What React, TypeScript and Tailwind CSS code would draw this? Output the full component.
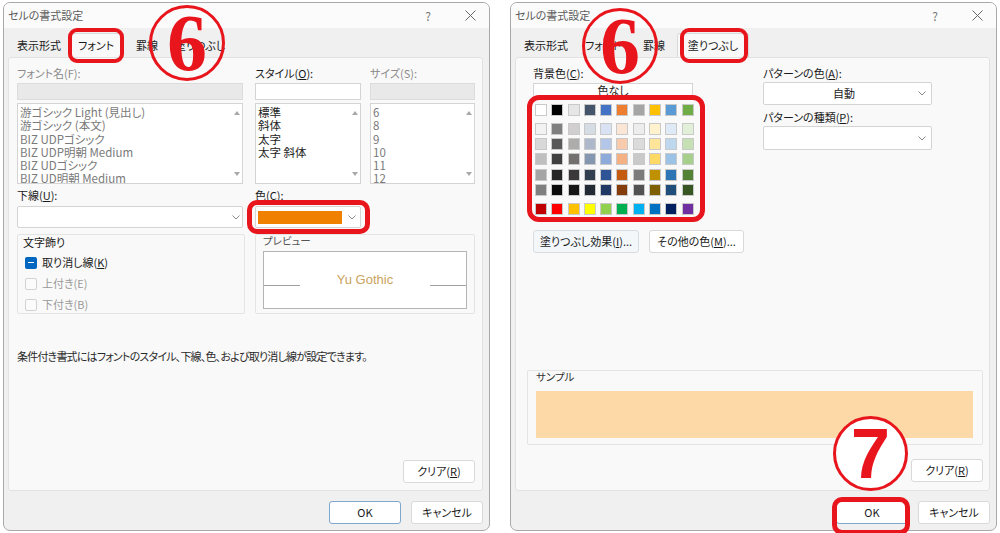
import React from 'react';

const swatchTop: string[] = [
  'bg-[#ffffff]', 'bg-[#000000]', 'bg-[#e7e6e6]', 'bg-[#44546a]', 'bg-[#4472c4]',
  'bg-[#ed7d31]', 'bg-[#a5a5a5]', 'bg-[#ffc000]', 'bg-[#5b9bd5]', 'bg-[#70ad47]',
];

const swatchShades: string[][] = [
  ['bg-[#f2f2f2]', 'bg-[#7f7f7f]', 'bg-[#d0cece]', 'bg-[#d6dce4]', 'bg-[#d9e2f3]', 'bg-[#fbe5d5]', 'bg-[#ededed]', 'bg-[#fff2cc]', 'bg-[#deebf6]', 'bg-[#e2efd9]'],
  ['bg-[#d8d8d8]', 'bg-[#595959]', 'bg-[#aeabab]', 'bg-[#adb9ca]', 'bg-[#b4c6e7]', 'bg-[#f7cbac]', 'bg-[#dbdbdb]', 'bg-[#fee599]', 'bg-[#bdd7ee]', 'bg-[#c5e0b3]'],
  ['bg-[#bfbfbf]', 'bg-[#3f3f3f]', 'bg-[#757070]', 'bg-[#8496b0]', 'bg-[#8eaadb]', 'bg-[#f4b183]', 'bg-[#c9c9c9]', 'bg-[#ffd965]', 'bg-[#9cc3e5]', 'bg-[#a8d08d]'],
  ['bg-[#a5a5a5]', 'bg-[#262626]', 'bg-[#3a3838]', 'bg-[#323f4f]', 'bg-[#2f5496]', 'bg-[#c55a11]', 'bg-[#7b7b7b]', 'bg-[#bf9000]', 'bg-[#2e75b5]', 'bg-[#538135]'],
  ['bg-[#7f7f7f]', 'bg-[#0c0c0c]', 'bg-[#171616]', 'bg-[#222a35]', 'bg-[#1f3864]', 'bg-[#843c0b]', 'bg-[#525252]', 'bg-[#7f6000]', 'bg-[#1e4e79]', 'bg-[#375623]'],
];

const swatchStandard: string[] = [
  'bg-[#c00000]', 'bg-[#ff0000]', 'bg-[#ffc000]', 'bg-[#ffff00]', 'bg-[#92d050]',
  'bg-[#00b050]', 'bg-[#00b0f0]', 'bg-[#0070c0]', 'bg-[#002060]', 'bg-[#7030a0]',
];

const tabLabels = ['表示形式', 'フォント', '罫線', '塗りつぶし'];

const Chevron: React.FC = () => (
  <svg width="8" height="5" viewBox="0 0 8 5" fill="none" stroke="#8a8a8a" strokeWidth="1">
    <polyline points="0.5,0.5 4,4 7.5,0.5" />
  </svg>
);

const ScrollArrows: React.FC = () => (
  <div className="w-[11px] flex flex-col justify-between items-center py-[7px]">
    <svg width="6" height="4" viewBox="0 0 6 4"><polygon points="3,0 6,4 0,4" fill="#a8a8a8" /></svg>
    <svg width="6" height="4" viewBox="0 0 6 4"><polygon points="0,0 6,0 3,4" fill="#a8a8a8" /></svg>
  </div>
);

const ListBox: React.FC<{ items: string[]; disabled?: boolean }> = ({ items, disabled }) => (
  <div className="mt-[3px] h-[81px] bg-white border border-[#d4d4d4] flex overflow-hidden">
    <div className={`flex-1 pl-[2px] pt-[2px] text-[11.5px] leading-[13.3px] ${disabled ? 'text-[#7a7a7a]' : 'text-[#222]'}`}>
      {items.map((it) => (
        <div key={it} className="whitespace-nowrap">{it}</div>
      ))}
    </div>
    <ScrollArrows />
  </div>
);

const Btn: React.FC<{ children: React.ReactNode; w: string; tint?: boolean; primary?: boolean }> = ({ children, w, tint, primary }) => (
  <div
    className={`${w} h-[23px] flex items-center justify-center text-[11px] text-[#1a1a1a] rounded-[3px] border ${
      primary ? 'border-[#7fa6cc] bg-white' : tint ? 'border-[#d8dde2] bg-[#f3f7fa]' : 'border-[#d9d9d9] bg-white'
    }`}
  >
    {children}
  </div>
);

const Dialog: React.FC<{ tabWidths: string[]; selected: number; children: React.ReactNode }> = ({ tabWidths, selected, children }) => (
  <div className="w-[487px] h-[529px] flex flex-col border border-[#a9a9a9] rounded-[7px] overflow-hidden bg-[#f0f0f0]">
    <div className="h-[25px] shrink-0 bg-[#fbfbfb] flex items-center pl-[4px] pr-[12px]">
      <span className="text-[11px] text-[#5c5c5c]">セルの書式設定</span>
      <span className="ml-auto w-[10px] text-center text-[12px] text-[#777]">?</span>
      <span className="ml-[30px] w-[14px] flex justify-center">
        <svg width="11" height="11" viewBox="0 0 11 11" stroke="#666" strokeWidth="1">
          <line x1="0.5" y1="0.5" x2="10.5" y2="10.5" />
          <line x1="10.5" y1="0.5" x2="0.5" y2="10.5" />
        </svg>
      </span>
    </div>
    <div className="h-[29px] shrink-0 flex items-end pl-[6px]">
      {tabLabels.map((t, i) => (
        <div
          key={t}
          className={`${tabWidths[i]} h-[24px] flex items-center justify-center text-[11px] text-[#1a1a1a] ${
            i === selected ? 'bg-[#f9f9f9] border border-b-0 border-[#dadada] rounded-t-[3px]' : ''
          }`}
        >
          {t}
        </div>
      ))}
    </div>
    <div className="h-[434px] shrink-0 ml-[4px] mr-[6px] bg-[#f9f9f9] border border-[#e2e2e2] rounded-[3px] flex flex-col">
      {children}
    </div>
    <div className="flex-1 flex justify-end gap-[10px] pr-[6px] pt-[10px]">
      <Btn w="w-[72px]" primary>OK</Btn>
      <Btn w="w-[72px]">キャンセル</Btn>
    </div>
  </div>
);

const FontPanel: React.FC = () => (
  <div className="flex-1 flex flex-col pl-[8px] pr-[7px] pt-[8px] pb-[7px]">
    <div className="flex">
      <div className="w-[226px]">
        <div className="h-[14px] leading-[14px] text-[11px] text-[#8a8a8a]">フォント名(F):</div>
        <div className="mt-[3px] h-[17px] bg-[#e9e9e9] border border-[#dcdcdc]" />
        <ListBox
          disabled
          items={['游ゴシック Light (見出し)', '游ゴシック (本文)', 'BIZ UDPゴシック', 'BIZ UDP明朝 Medium', 'BIZ UDゴシック', 'BIZ UD明朝 Medium']}
        />
      </div>
      <div className="w-[106px] ml-[12px]">
        <div className="h-[14px] leading-[14px] text-[11px] text-[#1a1a1a]">
          スタイル(<span className="underline">O</span>):
        </div>
        <div className="mt-[3px] h-[17px] bg-white border border-[#d4d4d4]" />
        <ListBox items={['標準', '斜体', '太字', '太字 斜体']} />
      </div>
      <div className="w-[105px] ml-[9px]">
        <div className="h-[14px] leading-[14px] text-[11px] text-[#8a8a8a]">サイズ(S):</div>
        <div className="mt-[3px] h-[17px] bg-[#e9e9e9] border border-[#dcdcdc]" />
        <ListBox disabled items={['6', '8', '9', '10', '11', '12']} />
      </div>
    </div>

    <div className="flex mt-[4px]">
      <div className="w-[226px]">
        <div className="h-[14px] leading-[14px] text-[11px] text-[#1a1a1a]">
          下線(<span className="underline">U</span>):
        </div>
        <div className="mt-[4px] h-[22px] bg-white border border-[#d4d4d4] rounded-[2px] flex items-center justify-end pr-[2px]">
          <Chevron />
        </div>
      </div>
      <div className="w-[106px] ml-[12px]">
        <div className="h-[14px] leading-[14px] text-[11px] text-[#1a1a1a]">
          色(<span className="underline">C</span>):
        </div>
        <div className="mt-[4px] h-[22px] bg-white border border-[#d4d4d4] rounded-[2px] flex items-center pl-[2px] pr-[4px]">
          <div className="w-[84px] h-[13px] bg-[#f08000]" />
          <div className="ml-auto"><Chevron /></div>
        </div>
      </div>
    </div>

    <div className="flex mt-[6px]">
      <div className="w-[228px] h-[80px] border border-[#e4e4e4] rounded-[2px] pl-[5px] pt-[1px]">
        <div className="h-[12px] leading-[12px] text-[11px] text-[#1a1a1a]">文字飾り</div>
        <div className="mt-[4px] flex flex-col">
          <div className="h-[21px] flex items-center pl-[2px]">
            <div className="w-[12px] h-[12px] bg-[#0067c0] rounded-[2px] flex items-center justify-center">
              <div className="w-[6px] h-[1.5px] bg-white" />
            </div>
            <span className="ml-[5px] text-[11px] text-[#1a1a1a]">
              取り消し線(<span className="underline">K</span>)
            </span>
          </div>
          <div className="h-[21px] flex items-center pl-[2px]">
            <div className="w-[12px] h-[12px] border border-[#d2d2d2] rounded-[2px] bg-[#fbfbfb]" />
            <span className="ml-[5px] text-[11px] text-[#9a9a9a]">上付き(E)</span>
          </div>
          <div className="h-[21px] flex items-center pl-[2px]">
            <div className="w-[12px] h-[12px] border border-[#d2d2d2] rounded-[2px] bg-[#fbfbfb]" />
            <span className="ml-[5px] text-[11px] text-[#9a9a9a]">下付き(B)</span>
          </div>
        </div>
      </div>
      <div className="w-[220px] ml-[10px] h-[80px] border border-[#e4e4e4] rounded-[2px] pl-[7px] pr-[7px] pt-[0px]">
        <div className="h-[12px] leading-[12px] text-[10.5px] text-[#555]">プレビュー</div>
        <div className="mt-[4px] h-[58px] bg-white border border-[#b4b4b4] flex items-center">
          <div className="w-[36px] h-px bg-[#a0a0a0] mt-[10px]" />
          <div className="flex-1 text-center text-[13px] text-[#c9a35e] font-['Liberation_Sans','Noto_Sans',sans-serif]">Yu Gothic</div>
          <div className="w-[36px] h-px bg-[#a0a0a0] mt-[10px]" />
        </div>
      </div>
    </div>

    <div className="mt-[35px] h-[14px] leading-[14px] text-[11px] tracking-[-0.8px] text-[#2a2a2a] whitespace-nowrap">
      条件付き書式にはフォントのスタイル、下線、色、および取り消し線が設定できます。
    </div>

    <div className="mt-auto flex justify-end">
      <Btn w="w-[72px]">
        クリア(<span className="underline">R</span>)
      </Btn>
    </div>
  </div>
);

const Swatch: React.FC<{ c: string }> = ({ c }) => (
  <div className={`w-[12px] h-[12px] border border-[#c9c9c9] ${c}`} />
);

const FillPanel: React.FC = () => (
  <div className="flex-1 flex flex-col pl-[11px] pr-[6px] pt-[8px] pb-[8px]">
    <div className="flex">
      <div className="w-[236px] pl-[6px]">
        <div className="h-[14px] leading-[14px] text-[11px] text-[#1a1a1a]">
          背景色(<span className="underline">C</span>):
        </div>
        <div className="mt-[3px] w-[160px] h-[15px] bg-white border border-[#d4d4d4] flex items-center justify-center text-[11px] leading-none text-[#1a1a1a]">
          色なし
        </div>
        <div className="mt-[6px] ml-[2px] w-[165px]">
          <div className="grid grid-cols-[repeat(10,12px)] gap-x-[4.3px]">
            {swatchTop.map((c, i) => <Swatch key={i} c={c} />)}
          </div>
          <div className="mt-[7px] grid grid-cols-[repeat(10,12px)] gap-x-[4.3px] gap-y-[3.2px]">
            {swatchShades.flat().map((c, i) => <Swatch key={i} c={c} />)}
          </div>
          <div className="mt-[7px] grid grid-cols-[repeat(10,12px)] gap-x-[4.3px]">
            {swatchStandard.map((c, i) => <Swatch key={i} c={c} />)}
          </div>
        </div>
        <div className="mt-[15px] flex gap-[10px]">
          <Btn w="w-[106px]" tint>
            塗りつぶし効果(<span className="underline">I</span>)...
          </Btn>
          <Btn w="w-[95px]">
            その他の色(<span className="underline">M</span>)...
          </Btn>
        </div>
      </div>
      <div className="w-[169px]">
        <div className="h-[14px] leading-[14px] text-[11px] text-[#1a1a1a]">
          パターンの色(<span className="underline">A</span>):
        </div>
        <div className="mt-[2px] h-[23px] bg-white border border-[#d4d4d4] rounded-[2px] flex items-center pr-[5px]">
          <span className="flex-1 text-center text-[11px] text-[#1a1a1a] pl-[6px]">自動</span>
          <Chevron />
        </div>
        <div className="mt-[5px] h-[14px] leading-[14px] text-[11px] text-[#1a1a1a]">
          パターンの種類(<span className="underline">P</span>):
        </div>
        <div className="mt-[2px] h-[24px] bg-white border border-[#d4d4d4] rounded-[2px] flex items-center justify-end pr-[5px]">
          <Chevron />
        </div>
      </div>
    </div>

    <div className="mt-auto h-[75px] border border-[#e4e4e4] rounded-[2px] pl-[8px] pr-[9px] pt-[0px]">
      <div className="h-[12px] leading-[12px] text-[10.5px] text-[#333]">サンプル</div>
      <div className="mt-[8px] h-[47px] bg-[#fdd9a7]" />
    </div>

    <div className="mt-[14px] flex justify-end">
      <Btn w="w-[72px]">
        クリア(<span className="underline">R</span>)
      </Btn>
    </div>
  </div>
);

const App: React.FC = () => {
  return (
    <div className="relative w-[1000px] h-[533px] overflow-hidden bg-white font-['Noto_Sans_CJK_JP','Noto_Sans',sans-serif] [font-feature-settings:'palt']">
      <div className="flex gap-[20px] pl-[3px] pt-[2px]">
        <Dialog tabWidths={['w-[58px]', 'w-[56px]', 'w-[46px]', 'w-[60px]']} selected={1}>
          <FontPanel />
        </Dialog>
        <Dialog tabWidths={['w-[58px]', 'w-[56px]', 'w-[46px]', 'w-[72px]']} selected={3}>
          <FillPanel />
        </Dialog>
      </div>

      {/* red annotation overlays */}
      <div className="absolute left-[68px] top-[28px] w-[56px] h-[35px] border-[4px] border-[#e8151d] rounded-[9px]" />
      <div className="absolute left-[680px] top-[28px] w-[68px] h-[35px] border-[4px] border-[#e8151d] rounded-[9px]" />
      <div className="absolute left-[247px] top-[200px] w-[123px] h-[34px] border-[5px] border-[#e8151d] rounded-[10px]" />
      <div className="absolute left-[527px] top-[95px] w-[178px] h-[127px] border-[5px] border-[#e8151d] rounded-[12px]" />
      <div className="absolute left-[832px] top-[497px] w-[78px] h-[38px] border-[5px] border-[#e8151d] rounded-[10px]" />

      <div className="absolute left-[149px] top-[5px] w-[76px] h-[76px] rounded-full border-[3px] border-[#e8151d] flex items-center justify-center">
        <span className="text-[80px] leading-none font-bold text-[#e8151d] font-['Liberation_Serif',serif]">6</span>
      </div>
      <div className="absolute left-[582px] top-[8px] w-[76px] h-[76px] rounded-full border-[3px] border-[#e8151d] flex items-center justify-center">
        <span className="text-[80px] leading-none font-bold text-[#e8151d] font-['Liberation_Serif',serif]">6</span>
      </div>
      <div className="absolute left-[833px] top-[416px] w-[75px] h-[75px] rounded-full border-[3px] border-[#e8151d] bg-white flex items-center justify-center">
        <span className="text-[70px] leading-none font-bold text-[#e8151d] font-['Liberation_Sans',sans-serif]">7</span>
      </div>
    </div>
  );
};

export default App;
